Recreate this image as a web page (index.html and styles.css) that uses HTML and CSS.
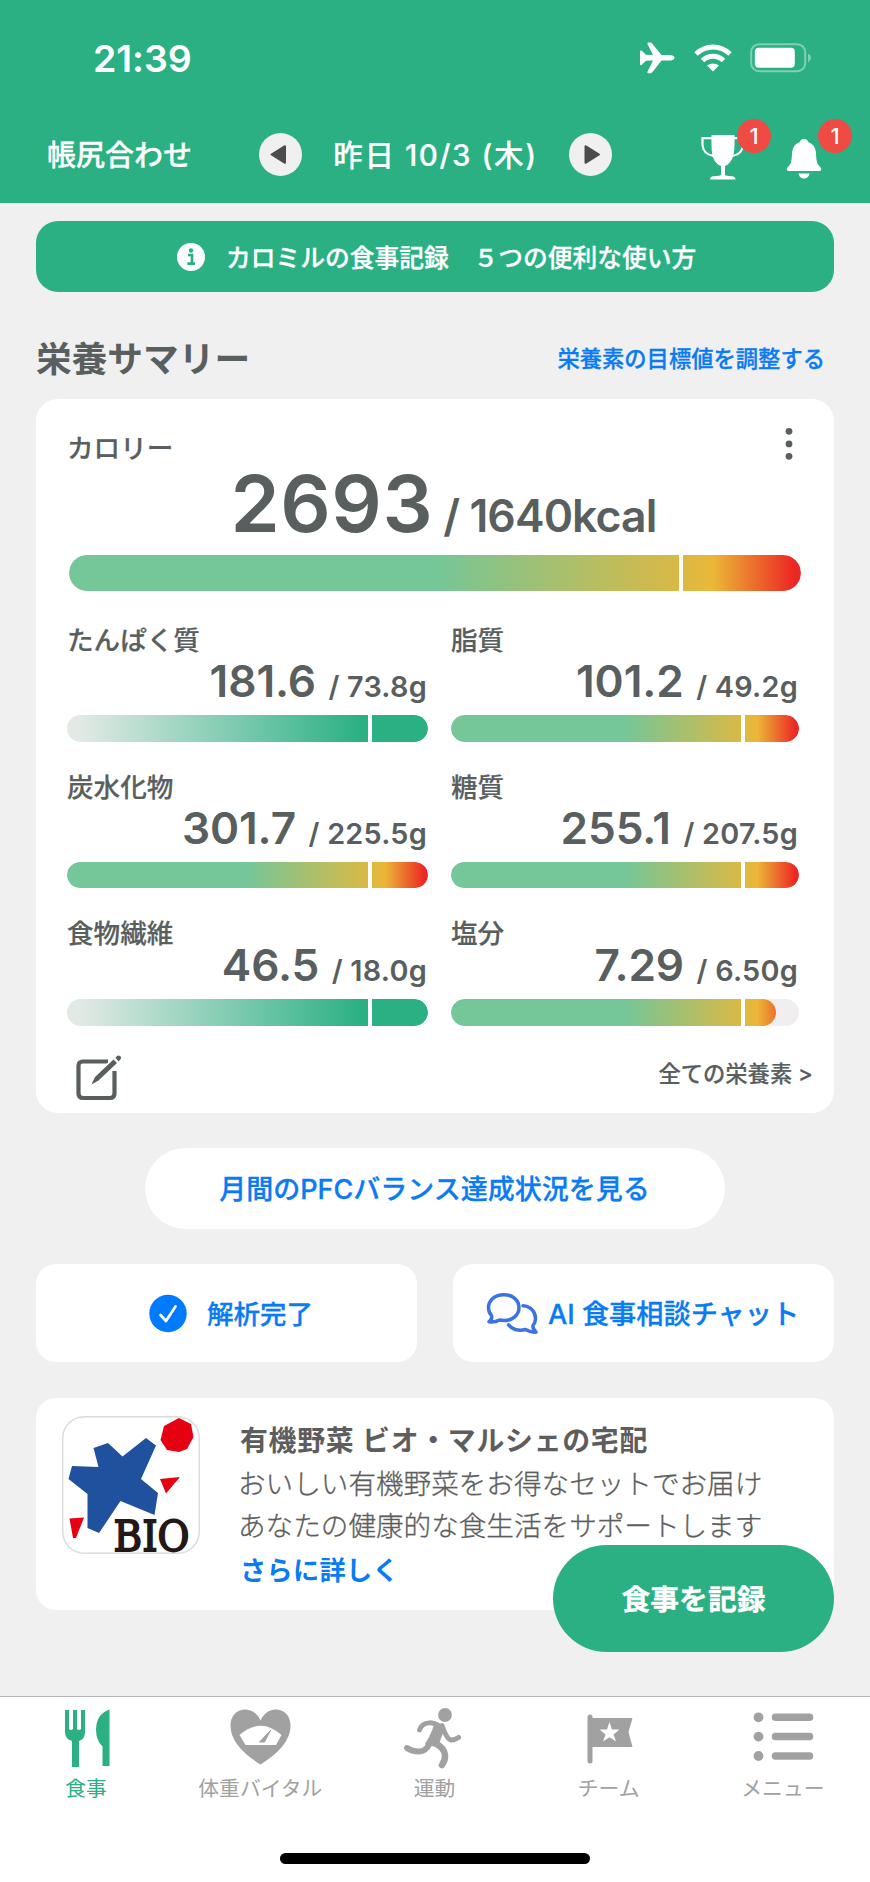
FILE: index.html
```html
<!DOCTYPE html>
<html lang="ja">
<head>
<meta charset="utf-8">
<title>食事</title>
<link rel="stylesheet" href="styles.css">
</head>
<body>
<div class="app">
  <header class="header">
    <div class="status">
      <span class="time">21:39</span>
      <div class="status-icons">
        <svg class="plane" width="36" height="32" viewBox="0 0 36 32"><path d="M1 9.5Q1 8 2.5 8.5L7 12.8 14 13 8.500 2Q7.800 .5 9.500 .5H11.500Q12.500 .5 13.500 2L22.500 13H31Q35.500 13.500 35.500 15.700T31 18.500H22.500L13.500 30Q12.500 31.200 11.500 31.200H9.500Q7.800 31.200 8.500 29.700L14 18.500 7 18.700 2.500 23Q1 23.500 1 22Z" fill="#fff"/></svg>
        <svg class="wifi" width="38" height="28" viewBox="0 0 38 28"><g fill="none" stroke="#fff" stroke-width="5"><path d="M2 10Q9.500 3 19 3T36 10"/><path d="M8.500 16.500Q13 12.300 19 12.300T29.500 16.500"/></g><path d="M13 21.500Q19 17.500 25 21.500L19 27.500Z" fill="#fff"/></svg>
        <svg class="battery" width="62" height="30" viewBox="0 0 62 30"><rect x="1.200" y="1.200" width="54" height="27" rx="8" fill="none" stroke="#7fd0b4" stroke-width="2"/><rect x="4.800" y="4.700" width="40" height="20" rx="4" fill="#fff"/><path d="M58 10.500Q61 12 61 14.800T58 19.500Z" fill="#7fd0b4"/></svg>
      </div>
    </div>
    <nav class="daybar">
      <span class="adjust">帳尻合わせ</span>
      <span class="round prev"><svg width="43" height="43" viewBox="0 0 43 43"><path d="M12.500 21.500 26 13.200V29.800Z" fill="#4c4c4c" stroke="#4c4c4c" stroke-width="2" stroke-linejoin="round"/></svg></span>
      <span class="date">昨日 10/3 (木)</span>
      <span class="round next"><svg width="43" height="43" viewBox="0 0 43 43"><path d="M30 21.500 16.500 13.200V29.800Z" fill="#4c4c4c" stroke="#4c4c4c" stroke-width="2" stroke-linejoin="round"/></svg></span>
      <span class="tool trophy"><svg width="44" height="46" viewBox="0 0 44 46"><path d="M10.500 0H33.500Q34 18 31.500 23 28.500 29.500 24 31V40Q25 41 31 41.200 34.500 41.500 34.500 44.500H9Q9 41.500 12.500 41.200 19 41 20 40V31Q15 29.500 12.300 23 10 18 10.500 0Z" fill="#fff"/><path d="M11 3.200H1.500V10Q2 19 12.500 21M33 3.200H42V10Q41.500 19 31.500 21" fill="none" stroke="#fff" stroke-width="2.200"/></svg><b class="badge">1</b></span>
      <span class="tool bell"><svg width="36" height="40" viewBox="0 0 36 40"><path d="M18 0Q21.500 0 22.200 3 29.500 5.500 30 14 30.200 23 32 25.500L35 29Q36 32 33 32H3Q0 32 1 29L4 25.500Q5.800 23 6 14 6.500 5.500 13.800 3 14.500 0 18 0ZM12.500 34.500H23.500Q22.500 39.500 18 39.500T12.500 34.500Z" fill="#fff"/></svg><b class="badge">1</b></span>
    </nav>
  </header>

  <main class="content">
    <div class="banner">
      <svg width="28" height="28" viewBox="0 0 28 28"><circle cx="14" cy="14" r="14" fill="#fff"/><circle cx="14" cy="7.500" r="2.200" fill="#2ab083"/><path d="M11 12H15V20.500M10.300 20.700H18" fill="none" stroke="#2ab083" stroke-width="2.700"/></svg>
      <span>カロミルの食事記録　５つの便利な使い方</span>
    </div>

    <div class="section-head">
      <h1>栄養サマリー</h1>
      <a>栄養素の目標値を調整する</a>
    </div>

    <section class="summary">
      <div class="cal-head">
        <span class="label">カロリー</span>
        <svg width="8" height="34" viewBox="0 0 8 34" fill="#595e5e"><circle cx="4" cy="3.300" r="3.400"/><circle cx="4" cy="15.900" r="3.400"/><circle cx="4" cy="28.300" r="3.400"/></svg>
      </div>
      <div class="cal-value"><span class="big">2693</span><span class="goal">/ 1640kcal</span></div>
      <div class="bar bar-large"><div class="fill limit"></div><i class="tick"></i></div>

      <div class="metrics">
        <div class="metric"><div class="label">たんぱく質</div><div class="value"><span class="num">181.6</span><span class="unit">/ 73.8g</span></div><div class="bar"><div class="fill reach"></div><i class="tick"></i></div></div>
        <div class="metric"><div class="label">脂質</div><div class="value"><span class="num">101.2</span><span class="unit">/ 49.2g</span></div><div class="bar"><div class="fill limit"></div><i class="tick"></i></div></div>
        <div class="metric"><div class="label">炭水化物</div><div class="value"><span class="num">301.7</span><span class="unit">/ 225.5g</span></div><div class="bar"><div class="fill limit"></div><i class="tick"></i></div></div>
        <div class="metric"><div class="label">糖質</div><div class="value"><span class="num">255.1</span><span class="unit">/ 207.5g</span></div><div class="bar"><div class="fill limit"></div><i class="tick"></i></div></div>
        <div class="metric compact"><div class="label">食物繊維</div><div class="value"><span class="num">46.5</span><span class="unit">/ 18.0g</span></div><div class="bar"><div class="fill reach"></div><i class="tick"></i></div></div>
        <div class="metric compact"><div class="label">塩分</div><div class="value"><span class="num">7.29</span><span class="unit">/ 6.50g</span></div><div class="bar"><div class="fill limit" style="width:93.3%"></div><i class="tick"></i></div></div>
      </div>

      <div class="summary-foot">
        <svg width="46" height="46" viewBox="0 0 46 46"><path d="M32 6.500H7Q2.500 6.500 2.500 11V38.500Q2.500 43 7 43H34Q38.500 43 38.500 38.500V16" fill="none" stroke="#595e5e" stroke-width="4.200"/><path d="M15.500 29.500 19 22 37.500 4.500 41 8 22.500 25.500Z" fill="#595e5e" stroke="#fff" stroke-width="3" paint-order="stroke"/><path d="M39.500 2.800Q41.500-.5 44 1T43.500 5.500L42.500 6.500Z" fill="#595e5e"/></svg>
        <a>全ての栄養素 &gt;</a>
      </div>
    </section>

    <a class="pill"><span>月間のPFCバランス達成状況を見る</span></a>

    <div class="actions">
      <a class="action"><svg class="check" width="38" height="38" viewBox="0 0 38 38"><circle cx="19" cy="19.500" r="18.700" fill="#007aff"/><path d="M11.500 21 17 27 26.500 12.500" fill="none" stroke="#fff" stroke-width="2.700" stroke-linecap="round" stroke-linejoin="round"/></svg><span>解析完了</span></a>
      <a class="action chat-action"><svg width="51" height="41" viewBox="0 0 51 41"><g fill="none" stroke="#3b73df" stroke-width="3.500" stroke-linecap="round" stroke-linejoin="round"><path d="M4.500 22.500Q1.500 19.500 1.500 14.800C1.500 7 8 1.700 16.800 1.700S32 7 32 14.500 25.500 27.500 17 27.500L12.500 27Q8 29.500 2 28.800 5.500 26.500 4.500 22.500Z"/><path d="M36 12.700C44 13.300 48.500 19 48.500 25.500Q48.500 29.500 46 32.500 45.500 36 49 39 44.500 39.800 38.500 36.500C31 38.500 24.500 36 21.500 31.800"/></g></svg><span>AI 食事相談チャット</span></a>
    </div>

    <section class="promo">
      <div class="promo-logo">
        <svg width="138" height="138" viewBox="0 0 138 138">
          <path d="M31.500 32 46 27 60.500 40.500 84 22 94 29.500 79 63 96 77 92.500 99 58.500 85 37 117 25.500 112V78L6.500 63 10 50 36.500 51Z" fill="#1f519f"/>
          <path d="M117 2 129 8 131.500 21 125 33 117 36 105 34 98.500 24 102 10ZM98 63 118 61 104 77.500ZM7.500 102.500 22 101.500 14 122H11Z" fill="#e50012"/>
          <text class="logo-word" x="51.500" y="135" textLength="76" lengthAdjust="spacingAndGlyphs">BIO</text>
        </svg>
      </div>
      <div class="promo-copy">
        <h2>有機野菜 ビオ・マルシェの宅配</h2>
        <p>おいしい有機野菜をお得なセットでお届け</p>
        <p>あなたの健康的な食生活をサポートします</p>
        <a>さらに詳しく</a>
      </div>
      <a class="record"><span>食事を記録</span></a>
    </section>
  </main>

  <footer class="tabbar">
    <div class="tabs">
      <a class="tab active"><svg width="64" height="64" viewBox="-1.5 0 64 64" fill="currentColor"><path d="M9.500 6H13.500V25Q15.500 27 17.500 25V6H21.500V25Q23.500 27 25.500 25V6H29.500V28Q29.500 35 23.500 37V63H16.500V37Q9.500 35 9.500 28ZM54 5.500V62H47V42.500Q40.500 37 40.500 25 41 10 54 5.500Z"/></svg><span>食事</span></a>
      <a class="tab"><svg width="64" height="64" viewBox="-0.5 0 64 64"><path d="M32 16.500C36 8 42 5.500 48 5.500 57 6 62 13 62 21.500 62 37 49 50 32 60.500 15 50 2 37 2 21.500 2 13 7 6 16 5.500 22 5.500 28 8 32 16.500Z" fill="currentColor"/><path d="M11 31Q32 12.500 53 31L47.500 41H17Z" fill="#fff"/><path d="M31 38 42 26.500 36 38Z" fill="currentColor" stroke="currentColor"/></svg><span>体重バイタル</span></a>
      <a class="tab"><svg width="64" height="64" viewBox="0 0 64 64" fill="none" stroke="currentColor" stroke-linecap="round" stroke-linejoin="round"><circle cx="43" cy="11" r="6.900" fill="currentColor" stroke="none"/><path d="M17.500 26Q20 19 27 18.800 32 18.500 36 21" stroke-width="4.800"/><path d="M40 21.500Q44.500 35 49 36 53 36 56.500 33.500" stroke-width="5"/><path d="M34 20 41 24Q37.500 34 35 40L25 40Q29 34 32 26Z" fill="currentColor" stroke-width="3.500"/><path d="M28 39Q24 47.500 17 47.500 10 47.500 5 44" stroke-width="5.800"/><path d="M32 39Q42 43 43 51 43.500 56 40 61" stroke-width="6.500"/></svg><span>運動</span></a>
      <a class="tab"><svg width="64" height="64" viewBox="-1.5 0 64 64"><path d="M11.500 13V57" fill="none" stroke="currentColor" stroke-width="5" stroke-linecap="round"/><path d="M12 14H54L50 28 54 43H12Z" fill="currentColor"/><path d="M31 18 33.500 25.500H41L35 30.500 37.500 37.500 31 33.200 24.500 37.500 27 30.500 21 25.500H28.500Z" fill="#fff"/></svg><span>チーム</span></a>
      <a class="tab"><svg width="64" height="64" viewBox="0 0 64 64"><path d="M24.500 13.300H58.500M24.500 32.600H58.500M24.500 52H58.500" stroke="currentColor" stroke-width="7.500" stroke-linecap="round"/><g fill="currentColor"><circle cx="7.500" cy="13.300" r="4.900"/><circle cx="7.500" cy="32.600" r="4.900"/><circle cx="7.500" cy="52" r="4.900"/></g></svg><span>メニュー</span></a>
    </div>
    <div class="home"></div>
  </footer>
</div>
</body>
</html>
```
FILE: styles.css
```css
* { box-sizing: border-box; }
body {
  margin: 0;
  background: #f0f0f0;
  color: #595e5e;
  font-family: Inter, "Noto Sans CJK JP", sans-serif;
  font-weight: 500;
}
svg { display: block; flex: none; overflow: visible; }
h1, h2, p { margin: 0; }
a { color: #0a7bf2; text-decoration: none; white-space: nowrap; }
.app { width: 870px; height: 1882px; display: flex; flex-direction: column; overflow: hidden; }

.header { height: 203px; background: #2ab083; color: #fff; flex: none; }
.status { height: 116px; padding: 0 58px 0 93px; display: flex; align-items: center; justify-content: space-between; }
.time { font-size: 37.500px; font-weight: 600; letter-spacing: -0.1px; }
.status-icons { display: flex; align-items: center; }
.wifi { margin-left: 19px; }
.battery { margin-left: 18px; }
.daybar { height: 77px; display: flex; align-items: center; padding-left: 47px; white-space: nowrap; }
.adjust { width: 212px; font-size: 29px; padding-bottom: 4px; -webkit-text-stroke: 0.3px; }
.round { width: 43px; height: 43px; border-radius: 50%; background: #f0f0f0; }
.date { width: 267px; text-align: center; font-size: 29.500px; letter-spacing: 1.600px; padding-bottom: 4px; -webkit-text-stroke: 0.2px; }
.tool { position: relative; }
.trophy { margin: 7px 0 0 89px; }
.bell { margin: 9px 0 0 41px; }
.badge {
  position: absolute; width: 34px; height: 34px; border-radius: 50%;
  background: #ef4a43; font-size: 22px; line-height: 35px; font-weight: 500; text-align: center;
}
.trophy .badge { left: 36px; top: -16px; }
.bell .badge { left: 32px; top: -20px; }

.content { flex: none; height: 1493px; padding: 18px 36px 0; }
.banner {
  height: 71px; border-radius: 22px; background: #2ab083; color: #fff;
  display: flex; align-items: center; padding-left: 141px; gap: 21px;
  font-size: 24.750px; white-space: nowrap;
}
.banner span, .pill span, .action span, .record span { padding-bottom: 2px; -webkit-text-stroke: 0.3px; }
.section-head { height: 107px; padding: 27px 9px 0 0; display: flex; justify-content: space-between; }
.section-head h1 { font-size: 35.700px; line-height: 81px; font-weight: 600; }
.section-head a { font-size: 22.300px; line-height: 80px; -webkit-text-stroke: 0.3px; }

.summary { height: 714px; padding: 29px 33px 0 31px; border-radius: 22px; background: #fff; }
.cal-head { display: flex; justify-content: space-between; padding-right: 8px; }
.label { font-size: 26.600px; line-height: 40px; white-space: nowrap; -webkit-text-stroke: 0.2px; }
.cal-value { margin: -5px 0 12px; padding-left: 19px; height: 80px; line-height: 80px; display: flex; justify-content: center; align-items: baseline; white-space: nowrap; }
.big { font-size: 79px; font-weight: 600; letter-spacing: 0.500px; }
.goal { margin-left: 10px; font-size: 44.500px; letter-spacing: -0.900px; font-weight: 600; }
.bar { position: relative; height: 26.500px; border-radius: 14px; background: #f0eeee; overflow: hidden; --w: 361px; }
.metric:nth-child(even) .bar { --w: 348px; }
.bar-large { --w: 732px; height: 36px; width: 732px; border-radius: 18px; margin-left: 2px; }
.fill { height: 100%; border-radius: 18px; background-size: var(--w) 100%; background-repeat: no-repeat; }
.limit { background-image: linear-gradient(90deg, #75c698 50%, #dab945 83.500%, #ebb737 88%, #ed2824 99%); }
.reach { background-image: linear-gradient(90deg, #e3eae6 3%, #2ab083 82%); }
.tick { position: absolute; top: 0; left: 83.300%; width: 4.500px; height: 100%; background: #fff; }
.metrics { margin-top: 29px; display: grid; grid-template-columns: 361px 348px; column-gap: 23px; row-gap: 25px; }
.value { margin: -4px 1px 9px 0; height: 50px; line-height: 50px; display: flex; justify-content: flex-end; align-items: baseline; white-space: nowrap; }
.compact .value { margin-top: -13px; }
.num { font-size: 44.200px; font-weight: 600; letter-spacing: -0.100px; }
.unit { margin-left: 12.500px; font-size: 28.800px; font-weight: 600; letter-spacing: 0.250px; }
.summary-foot { display: flex; justify-content: space-between; padding: 29px 0 0 9px; margin-right: -12px; }
.summary-foot a { color: #595e5e; font-size: 22.300px; line-height: 38px; -webkit-text-stroke: 0.2px; }

.pill {
  display: flex; align-items: center; justify-content: center;
  width: 580px; height: 81px; margin: 35px auto; border-radius: 41px;
  background: #fff; font-size: 27px;
}
.pill span { padding-right: 1px; }
.actions { display: grid; grid-template-columns: 1fr 1fr; gap: 36px; }
.action { height: 98px; border-radius: 20px; background: #fff; display: flex; align-items: center; padding-left: 113px; gap: 20px; font-size: 26.500px; }
.chat-action { padding-left: 34px; gap: 10px; font-size: 27.200px; }

.promo { position: relative; margin-top: 36px; height: 212px; padding: 18px 0 0 26px; border-radius: 20px; background: #fff; display: flex; gap: 38px; }
.promo-logo { width: 138px; height: 138px; flex: none; border-radius: 22px; box-shadow: inset 0 0 0 1.500px #dcdcdc; }
.logo-word { font: 400 42px "DejaVu Serif", serif; fill: #231815; stroke: #231815; stroke-width: 1.800px; }
.promo-copy { white-space: nowrap; color: #5d5d5d; }
.promo-copy h2 { padding-left: 2px; font-size: 27.900px; line-height: 50px; font-weight: 600; letter-spacing: 0.700px; }
.promo-copy p { font-size: 27.600px; line-height: 42px; font-weight: 300; -webkit-text-stroke: 0.3px; }
.promo-copy p:first-of-type { margin-top: -3px; }
.promo-copy a { padding-left: 2px; font-size: 26.200px; line-height: 47px; font-weight: 600; letter-spacing: 0.300px; }
.record {
  position: absolute; left: 517px; top: 147px; width: 281px; height: 107px; border-radius: 54px;
  display: flex; align-items: center; justify-content: center;
  background: #2ab083; color: #fff; font-size: 28.800px; font-weight: 600;
}

.tabbar { height: 186px; background: #fff; border-top: 1px solid #b5b5b5; }
.tabs { display: grid; grid-template-columns: repeat(5, 1fr); height: 156px; margin-left: -1px; }
.tab { padding-top: 7px; display: flex; flex-direction: column; align-items: center; color: #a1a1a1; font-size: 20.800px; line-height: 42px; font-weight: 400; }
.active { color: #2ab083; }
.home { width: 310px; height: 11px; margin: 0 auto; border-radius: 6px; background: #000; }
```
